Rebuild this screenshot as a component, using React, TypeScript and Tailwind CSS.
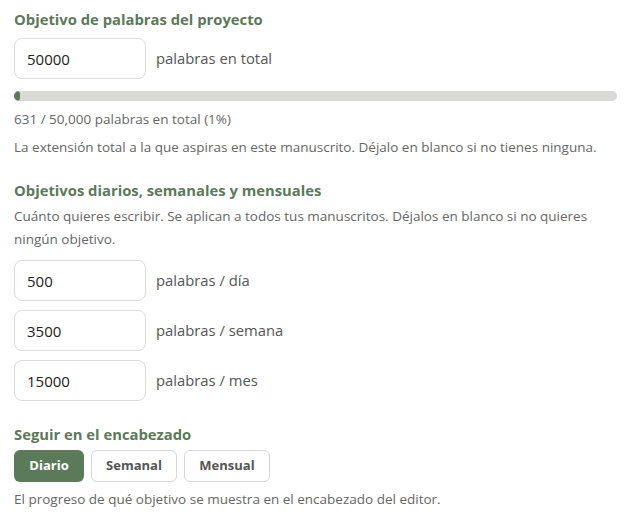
const font = { fontFamily: '"Open Sans", "Noto Sans", sans-serif' };

function GoalInput({ value, label }: { value: string; label: string }) {
  return (
    <div className="flex items-center gap-[10px]">
      <input
        readOnly
        value={value}
        className="h-[41px] w-[132px] rounded-[8px] border border-[#dcdcd8] bg-white px-[12px] text-[15px] text-[#222] outline-none"
      />
      <span className="text-[14.8px] text-[#555]">{label}</span>
    </div>
  );
}

export default function App() {
  const written = 631;
  const target = 50000;
  const pct = Math.max(1, Math.round((written / target) * 100));

  return (
    <div style={font} className="min-h-screen bg-white px-[14px] pt-[8px] text-[#555]">
      <h2 className="text-[14.8px] font-bold leading-[22px] text-[#5b7a59]">Objetivo de palabras del proyecto</h2>
      <div className="mt-[8px]">
        <GoalInput value="50000" label="palabras en total" />
      </div>
      <div className="mt-[12px] h-[10px] w-[603px] overflow-hidden rounded-full bg-[#d9dad5]">
        <div className="h-full rounded-full bg-[#5b7a59]" style={{ width: `${pct}%` }} />
      </div>
      <p className="mt-[8px] text-[13.5px] leading-[20px] text-[#666]">631 / 50,000 palabras en total (1%)</p>
      <p className="mt-[8px] text-[13.5px] leading-[20px] text-[#666]">
        La extensión total a la que aspiras en este manuscrito. Déjalo en blanco si no tienes ninguna.
      </p>

      <h2 className="mt-[22px] text-[14.8px] font-bold leading-[22px] text-[#5b7a59]">Objetivos diarios, semanales y mensuales</h2>
      <p className="mt-[4px] w-[600px] text-[13.5px] leading-[23px] text-[#666]">
        Cuánto quieres escribir. Se aplican a todos tus manuscritos. Déjalos en blanco si no quieres ningún objetivo.
      </p>
      <div className="mt-[9px] flex flex-col gap-[9px]">
        <GoalInput value="500" label="palabras / día" />
        <GoalInput value="3500" label="palabras / semana" />
        <GoalInput value="15000" label="palabras / mes" />
      </div>

      <h2 className="mt-[22px] text-[14.8px] font-bold leading-[22px] text-[#5b7a59]">Seguir en el encabezado</h2>
      <div className="mt-[5px] flex gap-[7px]">
        <button className="h-[32px] w-[70px] rounded-[6px] bg-[#5b7a59] text-[13px] font-bold text-white">Diario</button>
        <button className="h-[32px] w-[86px] rounded-[6px] border border-[#d6d6d2] bg-white text-[13px] font-bold text-[#555]">Semanal</button>
        <button className="h-[32px] w-[86px] rounded-[6px] border border-[#d6d6d2] bg-white text-[13px] font-bold text-[#555]">Mensual</button>
      </div>
      <p className="mt-[7px] text-[13.5px] leading-[20px] text-[#666]">
        El progreso de qué objetivo se muestra en el encabezado del editor.
      </p>
    </div>
  );
}
